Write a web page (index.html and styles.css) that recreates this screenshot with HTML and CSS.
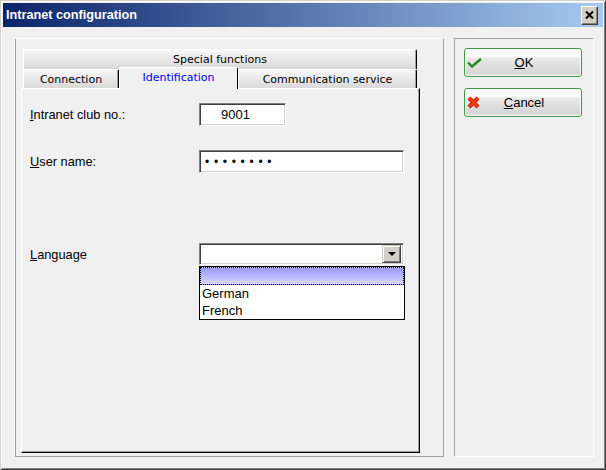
FILE: index.html
```html
<!DOCTYPE html>
<html>
<head>
    <title>Intranet configuration</title>
    <link rel="stylesheet" href="styles.css">
</head>
<body>
    <div class="window">
        <div class="titlebar">
            <span class="title">Intranet configuration</span>
            <span class="close">
                <svg width="9" height="8" viewBox="0 0 9 8"><path d="M1 0.5 L8 7.5 M8 0.5 L1 7.5" stroke="#000" stroke-width="2" fill="none"/></svg>
            </span>
        </div>
        <div class="client">
            <!-- Tabs -->
            <div class="group main">
                <div class="tabs">
                    <div class="tabrow top">
                        <div class="tab wide">Special functions</div>
                    </div>
                    <div class="tabrow">
                        <div class="tab conn">Connection</div>
                        <div class="tab ident active">Identification</div>
                        <div class="tab comm">Communication service</div>
                    </div>
                    <div class="page">
                        <div class="field">
                            <label><u>I</u>ntranet club no.:</label>
                            <div class="edit short">9001</div>
                        </div>
                        <div class="field second">
                            <label><u>U</u>ser name:</label>
                            <div class="edit long dots">••••••••</div>
                        </div>
                        <div class="field third">
                            <label><u>L</u>anguage</label>
                            <div class="combo">
                                <span class="drop-btn"><span class="arrow"></span></span>
                                <div class="list">
                                    <div class="item selected"></div>
                                    <div class="item">German</div>
                                    <div class="item">French</div>
                                </div>
                            </div>
                        </div>
                    </div>
                </div>
            </div>

            <!-- Buttons -->
            <div class="group side">
                <div class="btn">
                    <svg width="15" height="10" viewBox="0 0 15 10"><path d="M1 4.5 L5 8.5 L14 1" stroke="#1f8a1f" stroke-width="2.4" fill="none"/></svg>
                    <span><u>O</u>K</span>
                </div>
                <div class="btn">
                    <svg width="13" height="13" viewBox="0 0 13 13"><path d="M2 2 L11 11 M11 2 L2 11" stroke="#b82000" stroke-width="4" fill="none"/><path d="M2 2 L11 11 M11 2 L2 11" stroke="#ff3b18" stroke-width="2.2" fill="none"/></svg>
                    <span><u>C</u>ancel</span>
                </div>
            </div>
        </div>
    </div>
</body>
</html>
```

FILE: styles.css
```css
body {
    margin: 0;
    font-family: "Liberation Sans", Arial, sans-serif;
    font-size: 13px;
    background-color: #f0f0f0;
}
.window {
    width: 606px;
    height: 470px;
    box-sizing: border-box;
    padding: 2px;
    border: 1px solid;
    border-color: #d4d0c8 #404040 #404040 #d4d0c8;
    box-shadow: inset 1px 1px #ffffff, inset -1px -1px #808080;
    background-color: #f0f0f0;
    display: flex;
    flex-direction: column;
}
.titlebar {
    height: 24px;
    display: flex;
    align-items: center;
    justify-content: space-between;
    background: linear-gradient(to right, #0a246a, #a6caf0);
}
.title {
    color: #ffffff;
    font-weight: bold;
    font-size: 12.7px;
    padding-left: 3px;
}
.close {
    width: 17px;
    height: 19px;
    box-sizing: border-box;
    margin-right: 5px;
    background-color: #d4d0c8;
    border: 1px solid;
    border-color: #ffffff #404040 #404040 #ffffff;
    box-shadow: inset -1px -1px #808080;
    display: flex;
    align-items: center;
    justify-content: center;
}
.client {
    flex: 1;
    display: flex;
    gap: 10px;
    padding: 11px 9px 10px 11px;
}
.group {
    box-sizing: border-box;
    height: 419px;
    border: 1px solid;
}
.main {
    width: 430px;
    border-color: #ffffff #a0a0a0 #a0a0a0 #ffffff;
    box-shadow: inset 1px 0 #a0a0a0;
    padding: 10px 0 3px 6px;
}
.side {
    width: 140px;
    border-color: #a0a0a0 #ffffff #ffffff #a0a0a0;
    padding: 9px 0 0 9px;
    display: flex;
    flex-direction: column;
    gap: 11px;
}
.tabs {
    width: 399px;
    height: 100%;
    display: flex;
    flex-direction: column;
}
.tabrow {
    display: flex;
    align-items: flex-start;
    height: 19px;
    margin-left: 2px;
}
.tabrow.top {
    height: 20px;
}
.tab {
    box-sizing: border-box;
    height: 100%;
    display: flex;
    align-items: center;
    justify-content: center;
    font-family: "DejaVu Sans", Tahoma, sans-serif;
    font-size: 11px;
    color: #000000;
    border-top: 1px solid #ffffff;
    border-left: 1px solid #ffffff;
    border-right: 1px solid #000000;
    border-radius: 2px 2px 0 0;
    box-shadow: inset -1px 0 #a0a0a0;
    background: linear-gradient(#f7f7f7, #d9d9d9);
}
.wide { width: 394px; }
.conn { width: 96px; }
.ident { width: 119px; }
.comm { width: 179px; }
.tab.active {
    position: relative;
    z-index: 1;
    height: 22px;
    margin-top: -2px;
    padding-bottom: 3px;
    color: #0000ff;
    background: #f0f0f0;
    box-shadow: none;
}
.page {
    flex: 1;
    box-sizing: border-box;
    border-top: 1px solid #ffffff;
    border-left: 1px solid #ffffff;
    border-right: 1px solid #000000;
    border-bottom: 1px solid #000000;
    box-shadow: inset -1px -1px #a0a0a0;
    padding: 14px 0 0 8px;
}
.field {
    display: flex;
    align-items: center;
}
.field.second { margin-top: 24px; }
.field.third { margin-top: 70px; }
label {
    width: 169px;
    font-size: 12.8px;
    color: #000000;
}
.edit, .combo {
    box-sizing: border-box;
    height: 23px;
    background-color: #ffffff;
    border: 1px solid;
    border-color: #808080 #ffffff #ffffff #808080;
    box-shadow: inset 1px 1px #404040, inset -1px -1px #d4d0c8;
    display: flex;
    align-items: center;
}
.short {
    width: 87px;
    padding-left: 21px;
}
.long {
    width: 205px;
    padding-left: 5px;
}
.dots {
    letter-spacing: 4.7px;
    font-size: 12px;
}
.combo {
    position: relative;
    width: 205px;
    height: 22px;
    justify-content: flex-end;
    padding-right: 2px;
}
.drop-btn {
    width: 19px;
    height: 18px;
    box-sizing: border-box;
    background-color: #d4d0c8;
    border: 1px solid;
    border-color: #d4d0c8 #404040 #404040 #d4d0c8;
    box-shadow: inset 1px 1px #ffffff, inset -1px -1px #808080;
    display: flex;
    align-items: center;
    justify-content: center;
}
.arrow {
    width: 0;
    height: 0;
    border-left: 4px solid transparent;
    border-right: 4px solid transparent;
    border-top: 4px solid #000000;
}
.list {
    position: absolute;
    left: -1px;
    top: 22px;
    width: 206px;
    height: 54px;
    box-sizing: border-box;
    border: 1px solid #000000;
    background-color: #ffffff;
    z-index: 2;
}
.item {
    height: 17px;
    line-height: 17px;
    padding-left: 2px;
    color: #000000;
}
.item.selected {
    box-sizing: border-box;
    height: 18px;
    border: 1px dotted #000000;
    background: linear-gradient(#9898ff, #d8d8ff);
}
.btn {
    width: 118px;
    height: 29px;
    box-sizing: border-box;
    border: 1px solid #3f9b3f;
    border-radius: 3px;
    box-shadow: inset 0 0 0 1px rgba(255, 255, 255, 0.8);
    background: linear-gradient(#ffffff 0%, #fbfbfb 28%, #e9e9e9 33%, #d6d6d6 88%, #e2e2e2 100%);
    display: grid;
    grid-template-columns: 18px 1fr 18px;
    align-items: center;
    padding-left: 2px;
}
.btn span {
    text-align: center;
    color: #000000;
}
```
